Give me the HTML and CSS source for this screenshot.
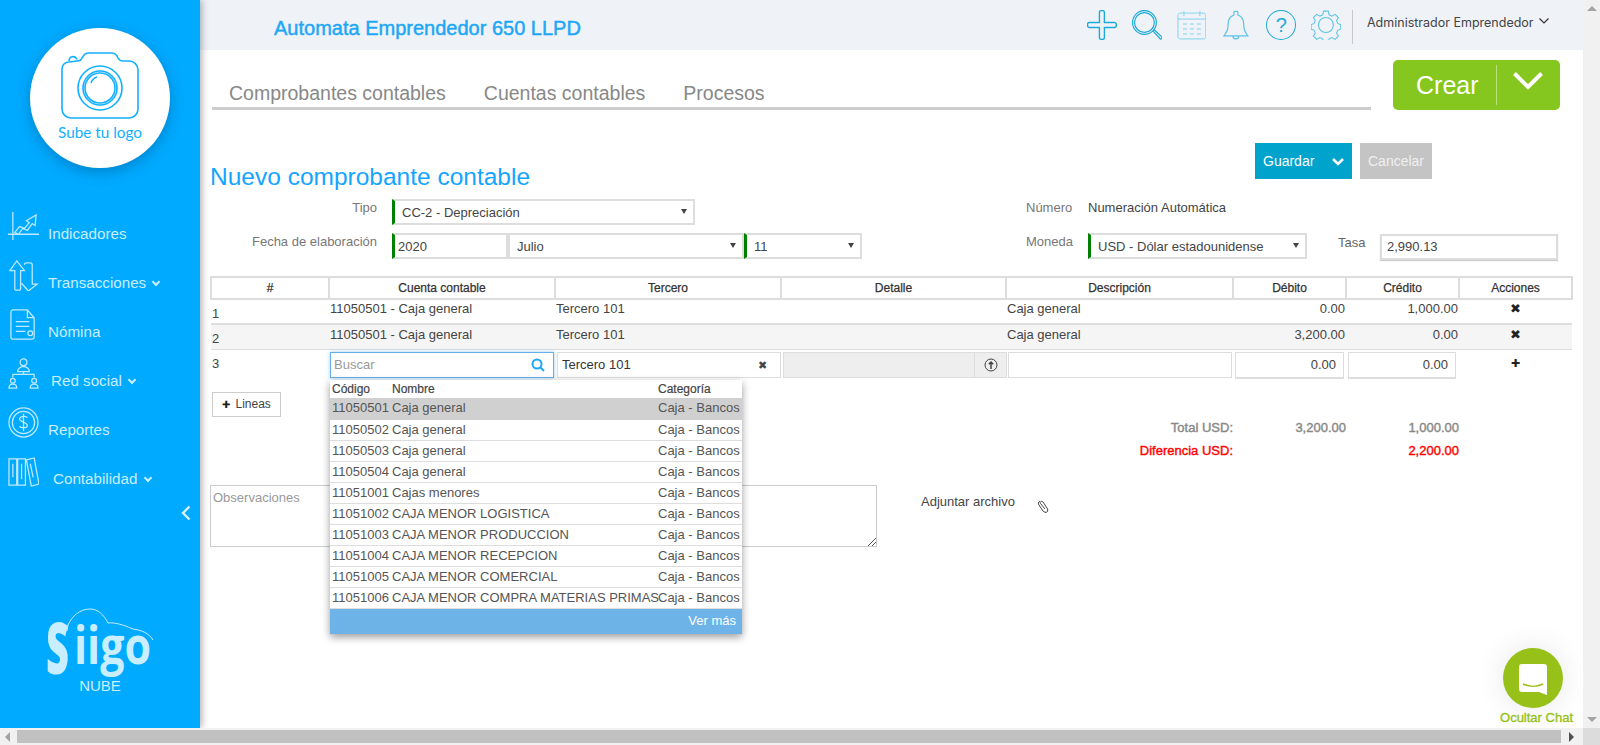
FILE: index.html
```html
<!DOCTYPE html>
<html lang="es">

<head>
  <meta charset="UTF-8">
  <title>Nuevo comprobante contable</title>
  <link rel="stylesheet" href="styles.css">
</head>

<body>
  <div class="window">
    <div class="app">
      <!-- menu lateral -->
      <aside class="sidebar">
        <div class="logo-circle">
          <svg class="camera" viewBox="0 0 78 68" fill="none" stroke="#12b0ff" stroke-width="1.6">
            <path d="M8 10c0-5 6-6 8-1.500M8 11C4 11 1 14 1 18v40c0 5 4 9 9 9h58c5 0 9-4 9-9V19c0-5-4-9-9-9h-6c-3 0-4-1-5-3-1-3-3-5-7-5H28c-4 0-5 2-7 5-1 3-3 3-5 3z" />
            <circle cx="39" cy="37" r="22" />
            <circle cx="39" cy="37" r="17" />
            <circle cx="39" cy="37" r="15" />
            <path d="M30 32c1-3 3-5 6-6" />
          </svg>
          <span class="logo-text">Sube tu logo</span>
        </div>
        <nav class="menu">
          <a class="menu-item">
            <svg class="menu-icon" viewBox="0 0 32 32">
              <path d="M5 1v29M0 24h32M7 22l5-6 5 2 5-6 -3-2 10-6 -1 11 -3-2 -5 7 -5-2 -4 6z" />
            </svg>
            <span class="menu-label">Indicadores</span>
          </a>
          <a class="menu-item">
            <svg class="menu-icon" viewBox="0 0 32 32">
              <path d="M9 1l8 10h-4v19c0 1-1 1-1 1H8c-1 0-1-1-1-1V11H2zM17 5c0-1 1-2 2-2h4c1 0 2 1 2 2v20h5l-9 7 -7-8" />
            </svg>
            <span class="menu-label">Transacciones <i class="caret"></i></span>
          </a>
          <a class="menu-item">
            <svg class="menu-icon" viewBox="0 0 32 32">
              <path d="M5 1h15l7 8v20c0 1-1 2-2 2H5c-1 0-2-1-2-2V3c0-1 1-2 2-2zM20 1v8h7M8 13h14M8 18h14M8 23h10" />
              <circle cx="23" cy="25" r="2.500" />
            </svg>
            <span class="menu-label">Nómina</span>
          </a>
          <a class="menu-item">
            <svg class="menu-icon" viewBox="0 0 32 32">
              <circle cx="16" cy="4.500" r="3.500" />
              <path d="M10 14c0-3 3-5 6-5s6 2 6 5zM16 14v3M5 20v-3h22v3" />
              <circle cx="5" cy="23.500" r="2.500" />
              <circle cx="27" cy="23.500" r="2.500" />
              <path d="M1 31c0-3 2-4 4-4s4 1 4 4zM23 31c0-3 2-4 4-4s4 1 4 4z" />
            </svg>
            <span class="menu-label menu-label-red">Red social <i class="caret"></i></span>
          </a>
          <a class="menu-item">
            <svg class="menu-icon" viewBox="0 0 32 32">
              <circle cx="16" cy="16" r="15" />
              <circle cx="16" cy="16" r="11.500" />
              <path d="M20 11c-1-2-7-2-8 1s8 4 8 7c0 3-7 3-8 1M16 7v18" />
            </svg>
            <span class="menu-label">Reportes</span>
          </a>
          <a class="menu-item">
            <svg class="menu-icon" viewBox="0 0 32 32">
              <path d="M1 3h8v27H1zM10 3h8v27h-8zM19 4l8-2 5 27 -8 2zM5 8v14M14 8v16M23 8l3 14" />
            </svg>
            <span class="menu-label menu-label-cont">Contabilidad <i class="caret"></i></span>
          </a>
        </nav>
        <svg class="collapse" viewBox="0 0 10 16" fill="none" stroke="#d6f1ff" stroke-width="2.400">
          <path d="M8.500 1.500L2 8l6.500 6.500" />
        </svg>
        <div class="brand">
          <svg class="brand-mark" viewBox="0 0 110 70">
            <path class="brand-cloud" d="M21 23L22 17C26 8 34 1 44 1C52 1 58 7 62 15C68 14 78 17 87 21C95 22 103 25 107 32" />
            <text class="brand-s" x="0" y="66" textLength="23" lengthAdjust="spacingAndGlyphs">S</text>
            <text class="brand-word" x="28" y="56" textLength="77" lengthAdjust="spacingAndGlyphs">iigo</text>
          </svg>
          <span class="brand-sub">NUBE</span>
        </div>
      </aside>

      <main class="content">
        <header class="topbar">
          <div class="company">Automata Emprendedor 650 LLPD</div>
          <div class="top-icons">
            <svg viewBox="0 0 30 30" fill="none" stroke="#1caad9" stroke-width="1.400">
              <path d="M12.500 2c0-2 5-2 5 0v10.500H28c2 0 2 5 0 5H17.500V28c0 2-5 2-5 0V17.500H2c-2 0-2-5 0-5h10.500z" />
            </svg>
            <svg viewBox="0 0 30 30" fill="none" stroke="#1caad9" stroke-width="1.200">
              <circle cx="12.500" cy="12.500" r="12" />
              <circle cx="12.500" cy="12.500" r="10" />
              <path d="M21 21l7.500 8c1 .5 2-1 1.500-2l-8-7.500" />
            </svg>
            <svg viewBox="0 0 30 30" fill="none" stroke="#82d3ec" stroke-width="1">
              <path d="M3 3h24c1 0 2 1 2 2v22c0 1-1 2-2 2H3c-1 0-2-1-2-2V5c0-1 1-2 2-2zM1 9h28M7 1v5M23 1v5M6 14h4M13 14h4M20 14h4M6 19h4M13 19h4M20 19h4M6 24h4M13 24h4M20 24h4" />
            </svg>
            <svg viewBox="0 0 30 30" fill="none" stroke="#5cc2e4" stroke-width="1.200">
              <path d="M13 5V2c0-1 4-1 4 0v3c6 2 6 8 6 12 0 4 2 6 4 9H3c2-3 4-5 4-9 0-4 0-10 6-12zM12 26c0 4 6 4 6 0" />
            </svg>
            <span class="help">?</span>
            <svg viewBox="0 0 30 30" fill="none" stroke="#5cc2e4" stroke-width="1.100">
              <path d="M12.500 1h5l1 4 3 1.500 3.500-2 3.500 3.500-2 3.500 1.500 3 3 1v5l-3 1-1.500 3 2 3.500-3.500 3.500-3.500-2-3 1.500-1 3h-5l-1-3-3-1.500-3.500 2-3.500-3.500 2-3.500-1.500-3-3-1v-5l3-1 1.500-3-2-3.500 3.500-3.500 3.500 2 3-1.500z" transform="translate(15 15) scale(.93) translate(-15 -16)" />
              <circle cx="15" cy="15" r="7.500" />
            </svg>
          </div>
          <div class="user">Administrador Emprendedor
            <svg class="user-caret" viewBox="0 0 10 6" fill="none" stroke="#333" stroke-width="1.200">
              <path d="M.5.500l4.500 4.500 4.500-4.500" />
            </svg>
          </div>
        </header>

        <div class="tabs-row">
          <div class="tabs">
            <a class="tab">Comprobantes contables</a>
            <a class="tab">Cuentas contables</a>
            <a class="tab">Procesos</a>
          </div>
          <div class="btn-crear">
            <span class="crear-text">Crear</span>
            <svg class="crear-caret" viewBox="0 0 30 18" fill="none" stroke="#fff" stroke-width="4">
              <path d="M1.500 1.500L15 15 28.500 1.500" />
            </svg>
          </div>
        </div>

        <div class="title-row">
          <h1>Nuevo comprobante contable</h1>
          <div class="actions">
            <button class="btn-guardar">Guardar
              <svg viewBox="0 0 12 8" fill="none" stroke="#fff" stroke-width="2.600">
                <path d="M1 1l5 5 5-5" />
              </svg>
            </button>
            <button class="btn-cancelar">Cancelar</button>
          </div>
        </div>

        <div class="form">
          <div class="form-col">
            <div class="form-row">
              <label class="label">Tipo</label>
              <div class="select required select-tipo">CC-2 - Depreciación</div>
            </div>
            <div class="form-row">
              <label class="label">Fecha de elaboración</label>
              <div class="date">
                <div class="select required select-year">2020</div>
                <div class="select select-month">Julio</div>
                <div class="select required select-day">11</div>
              </div>
            </div>
          </div>
          <div class="form-col form-col-right">
            <div class="form-row">
              <label class="label label-right">Número</label>
              <span class="value">Numeración Automática</span>
            </div>
            <div class="form-row">
              <label class="label label-right">Moneda</label>
              <div class="select required select-moneda">USD - Dólar estadounidense</div>
              <label class="label-tasa">Tasa</label>
              <div class="input input-tasa">2,990.13</div>
            </div>
          </div>
        </div>

        <table class="grid">
          <colgroup>
            <col class="w-num">
            <col class="w-lg">
            <col class="w-lg">
            <col class="w-det">
            <col class="w-desc">
            <col class="w-sm">
            <col class="w-sm">
            <col class="w-sm">
          </colgroup>
          <thead>
            <tr>
              <th>#</th>
              <th>Cuenta contable</th>
              <th>Tercero</th>
              <th>Detalle</th>
              <th>Descripción</th>
              <th>Débito</th>
              <th>Crédito</th>
              <th>Acciones</th>
            </tr>
          </thead>
          <tbody>
            <tr class="line">
              <td class="num">1</td>
              <td>11050501 - Caja general</td>
              <td>Tercero 101</td>
              <td></td>
              <td>Caja general</td>
              <td class="amount">0.00</td>
              <td class="amount">1,000.00</td>
              <td class="act">✖</td>
            </tr>
            <tr class="line line-alt">
              <td class="num">2</td>
              <td>11050501 - Caja general</td>
              <td>Tercero 101</td>
              <td></td>
              <td>Caja general</td>
              <td class="amount">3,200.00</td>
              <td class="amount">0.00</td>
              <td class="act">✖</td>
            </tr>
            <tr class="edit">
              <td class="num-edit">3</td>
              <td class="cell-search">
                <div class="input input-search">
                  <span>Buscar</span>
                  <svg viewBox="0 0 14 14" fill="none" stroke="#1ea7f5" stroke-width="2">
                    <circle cx="6" cy="6" r="4.500" />
                    <path d="M9.500 9.500L13 13" />
                  </svg>
                </div>
                <div class="dropdown">
                  <div class="dd-row dd-head"><span>Código</span><span>Nombre</span><span>Categoría</span></div>
                  <div class="dd-row dd-active"><span>11050501</span><span>Caja general</span><span>Caja - Bancos</span></div>
                  <div class="dd-row"><span>11050502</span><span>Caja general</span><span>Caja - Bancos</span></div>
                  <div class="dd-row"><span>11050503</span><span>Caja general</span><span>Caja - Bancos</span></div>
                  <div class="dd-row"><span>11050504</span><span>Caja general</span><span>Caja - Bancos</span></div>
                  <div class="dd-row"><span>11051001</span><span>Cajas menores</span><span>Caja - Bancos</span></div>
                  <div class="dd-row"><span>11051002</span><span>CAJA MENOR LOGISTICA</span><span>Caja - Bancos</span></div>
                  <div class="dd-row"><span>11051003</span><span>CAJA MENOR PRODUCCION</span><span>Caja - Bancos</span></div>
                  <div class="dd-row"><span>11051004</span><span>CAJA MENOR RECEPCION</span><span>Caja - Bancos</span></div>
                  <div class="dd-row"><span>11051005</span><span>CAJA MENOR COMERCIAL</span><span>Caja - Bancos</span></div>
                  <div class="dd-row"><span>11051006</span><span>CAJA MENOR COMPRA MATERIAS PRIMAS</span><span>Caja - Bancos</span></div>
                  <div class="dd-more">Ver más</div>
                </div>
              </td>
              <td>
                <div class="input input-tercero"><span>Tercero 101</span><span class="clear">✖</span></div>
              </td>
              <td>
                <div class="detalle">
                  <div class="detalle-field"></div>
                  <div class="detalle-btn">
                    <svg viewBox="0 0 14 14" fill="none" stroke="#444" stroke-width="1">
                      <circle cx="7" cy="7" r="6" />
                      <path stroke-width="1.500" d="M7 11V4M4.800 6.200L7 4l2.200 2.200" />
                    </svg>
                  </div>
                </div>
              </td>
              <td>
                <div class="input input-desc"></div>
              </td>
              <td>
                <div class="input input-amount input-debito">0.00</div>
              </td>
              <td>
                <div class="input input-amount input-credito">0.00</div>
              </td>
              <td class="act act-edit">✚</td>
            </tr>
          </tbody>
        </table>

        <button class="btn-lineas"><span class="plus">✚</span> Lineas</button>

        <div class="totals">
          <span>Total USD:</span><span>3,200.00</span><span>1,000.00</span>
          <span class="diff">Diferencia USD:</span><span></span><span class="diff">2,200.00</span>
        </div>

        <div class="notes">
          <div class="textarea">Observaciones
            <svg class="resize" viewBox="0 0 9 9" stroke="#555" stroke-width="1">
              <path d="M1 9l8-8M5 9l4-4" />
            </svg>
          </div>
          <span class="attach">Adjuntar archivo</span>
          <svg class="clip" viewBox="0 0 12 14" fill="none" stroke="#444" stroke-width="1">
            <path d="M3 2c-2 1-2 3-1 4l4 6c1 1 3 2 4 1s1-3 0-4L6 3C5 2 4 2 3.500 3S3 4 4 5l4 5" />
          </svg>
        </div>

        <div class="chat">
          <div class="chat-circle">
            <svg viewBox="0 0 28 31">
              <path fill="#fff" d="M3 0h22c2 0 3 1 3 3v28l-8-3H3c-2 0-3-1-3-3V3c0-2 1-3 3-3z" />
              <path fill="none" stroke="#97c118" stroke-width="1.600" d="M4 20c6 3 14 3 20 0" />
            </svg>
          </div>
          <span class="chat-text">Ocultar Chat</span>
        </div>
      </main>
    </div>

    <!-- barras de desplazamiento -->
    <div class="vbar"><i class="arrow arrow-up"></i><i class="arrow arrow-down"></i></div>
    <div class="hbar"><i class="arrow arrow-left"></i><div class="thumb"></div><i class="arrow arrow-right"></i></div>
    <div class="corner"></div>
  </div>
</body>

</html>
```

FILE: styles.css
```css
* {
  box-sizing: border-box;
}

html,
body {
  margin: 0;
  height: 100%;
  overflow: hidden;
}

body {
  font-family: "Liberation Sans", Arial, sans-serif;
  font-size: 13px;
  color: #555;
  background: #fff;
}

.window {
  display: grid;
  grid-template-columns: 1583px 17px;
  grid-template-rows: 728px 17px;
  height: 745px;
}

.app {
  display: flex;
  overflow: hidden;
}

/* sidebar */
.sidebar {
  width: 200px;
  flex: none;
  display: flex;
  flex-direction: column;
  background: #00aaff;
  box-shadow: 2px 0 7px rgba(0, 0, 0, .3);
  z-index: 2;
}

.logo-circle {
  width: 140px;
  height: 140px;
  margin: 28px 0 0 30px;
  border-radius: 50%;
  background: #fff;
  box-shadow: 0 4px 14px rgba(0, 60, 110, .35);
  display: flex;
  flex-direction: column;
  align-items: center;
  padding-top: 23px;
}

.camera {
  width: 78px;
  height: 68px;
}

.logo-text {
  font-family: Lato, sans-serif;
  font-size: 15.300px;
  color: #12b0ff;
  margin-top: 4px;
}

.menu {
  margin-top: 41px;
}

.menu-item {
  display: flex;
  align-items: flex-start;
  height: 49px;
  padding-left: 8px;
}

.menu-icon {
  width: 31px;
  height: 31px;
  margin-top: 2px;
  fill: none;
  stroke: #bfeaff;
  stroke-width: 1.300;
  flex: none;
}

.menu-label {
  margin: 16px 0 0 9px;
  font-size: 15.200px;
  line-height: 18px;
  color: #c8eeff;
}

.menu-label-red {
  margin-left: 12px;
}

.menu-label-cont {
  margin-left: 14px;
}

.caret {
  display: inline-block;
  width: 6px;
  height: 6px;
  margin: 0 0 3px 3px;
  border-right: 2px solid #c8eeff;
  border-bottom: 2px solid #c8eeff;
  transform: rotate(45deg);
}

.collapse {
  width: 10px;
  height: 16px;
  margin: 2px 0 0 181px;
}

.brand {
  margin-top: auto;
  padding-bottom: 34px;
  display: flex;
  flex-direction: column;
  align-items: center;
}

.brand-mark {
  width: 110px;
  height: 70px;
  margin-left: 2px;
}

.brand-cloud {
  fill: none;
  stroke: #c8eeff;
  stroke-width: 1;
}

.brand-s {
  font-family: "Open Sans", sans-serif;
  font-weight: 800;
  font-size: 70px;
  fill: #c8eeff;
}

.brand-word {
  font-family: "Open Sans", sans-serif;
  font-weight: 700;
  font-size: 52px;
  fill: #c8eeff;
}

.brand-sub {
  font-size: 15px;
  color: #c8eeff;
  margin-top: -1px;
}

/* area principal */
.content {
  flex: 1;
  min-width: 0;
  position: relative;
}

.topbar {
  height: 50px;
  display: flex;
  align-items: flex-start;
  background: #eff3f8;
  padding-top: 10px;
}

.company {
  width: 887px;
  padding-left: 74px;
  font-size: 20px;
  line-height: 36px;
  -webkit-text-stroke: .45px #1ea7f5;
  color: #1ea7f5;
}

.top-icons {
  display: flex;
  gap: 15px;
  width: 266px;
  padding-right: 11px;
  border-right: 1px solid #c8c8c8;
  height: 34px;
}

.top-icons svg {
  width: 30px;
  height: 30px;
}

.help {
  width: 30px;
  height: 30px;
  border: 1.300px solid #1caad9;
  border-radius: 50%;
  text-align: center;
  font-size: 20px;
  line-height: 28px;
  color: #1caad9;
}

.user {
  margin-left: 14px;
  font-family: Inter, sans-serif;
  font-size: 12.500px;
  line-height: 26px;
  color: #444;
  white-space: nowrap;
}

.user-caret {
  width: 10px;
  height: 6px;
  margin: 0 0 3px 2px;
}

.tabs-row {
  display: flex;
  height: 60px;
  padding: 10px 0 0 12px;
}

.tabs {
  width: 1159px;
  display: flex;
  gap: 38px;
  padding: 22px 0 0 17px;
  border-bottom: 3px solid #ccc;
}

.tab {
  font-size: 19.500px;
  line-height: 22px;
  color: #888;
}

.btn-crear {
  width: 167px;
  height: 50px;
  margin-left: 22px;
  background: #85c71e;
  border-radius: 5px;
  display: flex;
  padding-top: 5px;
}

.crear-text {
  width: 104px;
  height: 40px;
  padding-left: 23px;
  border-right: 1px solid #b9e07a;
  font-size: 25px;
  line-height: 40px;
  color: #fff;
}

.crear-caret {
  width: 30px;
  height: 18px;
  margin: 7px 0 0 16px;
}

.title-row {
  display: flex;
  justify-content: space-between;
  height: 56px;
  margin-top: 33px;
  padding: 0 151px 0 10px;
}

h1 {
  margin: 20px 0 0;
  font-size: 24.500px;
  font-weight: 400;
  line-height: 28px;
  color: #14a5ff;
}

.actions {
  display: flex;
  gap: 8px;
}

button {
  font-family: inherit;
  border: 0;
  padding: 0;
}

.btn-guardar {
  width: 97px;
  height: 36px;
  background: #00a3cc;
  color: #fff;
  font-size: 14px;
  text-align: left;
  padding-left: 8px;
}

.btn-guardar svg {
  width: 12px;
  height: 8px;
  margin-left: 14px;
}

.btn-cancelar {
  width: 72px;
  height: 36px;
  background: #c4c4c4;
  color: #f0f0f0;
  font-size: 14px;
}

/* formulario */
.form {
  display: flex;
}

.form-col {
  width: 826px;
  flex: none;
}

.form-row {
  display: flex;
  align-items: flex-start;
  height: 34px;
}

.label {
  width: 177px;
  line-height: 18px;
  text-align: right;
  color: #777;
  margin-right: 15px;
}

.label-right {
  width: 48px;
  text-align: left;
  margin-right: 14px;
}

.value {
  line-height: 18px;
  color: #444;
}

.select,
.input {
  height: 26px;
  border: 2px solid #ddd;
  background: #fff;
  line-height: 24px;
  color: #444;
  position: relative;
}

.select {
  padding-left: 7px;
}

.select::after {
  content: "";
  position: absolute;
  top: 8px;
  right: 6px;
  border: 3px solid transparent;
  border-top: 5px solid #444;
  border-bottom: 0;
}

.required {
  border-left: 3px solid #008000;
}

.select-tipo {
  width: 303px;
}

.date {
  display: flex;
}

.select-year {
  width: 116px;
  padding-left: 3px;
}

.select-year::after {
  display: none;
}

.select-month {
  width: 236px;
}

.select-day {
  width: 118px;
}

.form-col-right {
  width: 557px;
}

.select-moneda {
  width: 219px;
}

.label-tasa {
  width: 73px;
  padding-left: 31px;
  line-height: 20px;
  color: #666;
}

.input-tasa {
  width: 178px;
  margin-top: 1px;
  justify-content: flex-end;
  box-shadow: 0 1px 1px #ccc;
}

/* tabla de lineas */
.grid {
  width: 1361px;
  margin: 9px 0 0 10px;
  border-collapse: collapse;
  table-layout: fixed;
  color: #444;
}

.w-num {
  width: 118px;
}

.w-lg {
  width: 226px;
}

.w-det {
  width: 225px;
}

.w-desc {
  width: 227px;
}

.w-sm {
  width: 113px;
}

th {
  height: 22px;
  padding: 0;
  border: 2px solid #ddd;
  font-size: 12px;
  font-weight: 400;
  -webkit-text-stroke: .25px #333;
  color: #333;
}

td {
  padding: 1px;
  vertical-align: top;
  white-space: nowrap;
}

.line td {
  height: 23px;
  padding-top: 0;
  line-height: 17px;
  border-bottom: 2px solid #ddd;
}

.line-alt td {
  height: 25px;
  padding-top: 1px;
  background: #f5f5f5;
  border-bottom: 1px solid #ddd;
}

.line .num {
  padding-top: 5px;
}

.num-edit {
  padding-top: 6px;
}

.amount {
  text-align: right;
}

.act {
  text-align: center;
  font-size: 13px;
  color: #222;
}

.edit td {
  height: 30px;
  padding-top: 2px;
}

.edit .num-edit {
  padding-top: 6px;
}

.edit .act-edit {
  padding-top: 7px;
  font-size: 11px;
}

.cell-search {
  position: relative;
}

.input {
  display: flex;
  justify-content: space-between;
  align-items: center;
  padding: 0 5px;
}

.input-search {
  border: 1px solid #66afe9;
  box-shadow: 0 0 4px rgba(102, 175, 233, .6);
  color: #999;
  padding-left: 3px;
}

.input-search svg {
  width: 14px;
  height: 14px;
  margin-right: 3px;
}

.input-tercero {
  width: 224px;
  margin-left: 1px;
  border-width: 1px;
  color: #333;
  padding-left: 4px;
}

.clear {
  font-size: 11px;
  color: #444;
  margin-right: 8px;
}

.detalle {
  display: flex;
  width: 224px;
  height: 26px;
  margin-left: 1px;
  border: 1px solid #ddd;
}

.detalle-field {
  flex: 1;
  background: #eee;
}

.detalle-btn {
  width: 32px;
  background: #eee;
  border-left: 1px solid #ddd;
  display: flex;
  align-items: center;
  justify-content: center;
}

.detalle-btn svg {
  width: 14px;
  height: 14px;
}

.input-desc {
  width: 224px;
  margin-left: 1px;
  border-width: 1px;
}

.input-amount {
  justify-content: flex-end;
  height: 27px;
  border-width: 1px;
  border-bottom-width: 2px;
  padding-right: 7px;
}

.input-debito {
  width: 109px;
  margin-left: 1px;
}

.input-credito {
  width: 108px;
  margin-left: 1px;
}

.dropdown {
  position: absolute;
  top: 30px;
  left: 1px;
  width: 412px;
  background: #fff;
  box-shadow: 0 3px 8px rgba(0, 0, 0, .4);
  z-index: 3;
}

.dd-row {
  display: grid;
  grid-template-columns: 60px 266px 84px;
  height: 21px;
  padding-left: 2px;
  border-bottom: 1px solid #ddd;
  font-size: 13px;
  line-height: 20px;
  color: #555;
  white-space: nowrap;
}

.dd-head {
  height: 18px;
  border: 0;
  font-size: 12px;
  line-height: 18px;
  color: #444;
  -webkit-text-stroke: .2px #444;
}

.dd-active {
  height: 22px;
  background: #d0d0d0;
  border: 0;
}

.dd-more {
  height: 25px;
  padding-right: 6px;
  background: #6db3e8;
  color: #fff;
  font-size: 13px;
  line-height: 24px;
  text-align: right;
}

.btn-lineas {
  display: block;
  width: 69px;
  height: 25px;
  margin: 12px 0 0 12px;
  background: #fff;
  border: 1px solid #ccc;
  font-size: 12px;
  color: #444;
}

.plus {
  font-size: 10px;
  color: #222;
  margin-right: 2px;
}

.totals {
  display: grid;
  grid-template-columns: 1033px 113px 113px;
  grid-auto-rows: 23px;
  margin-top: 2px;
  font-size: 13px;
  line-height: 18px;
  text-align: right;
  color: #888;
  -webkit-text-stroke: .4px #888;
}

.totals .diff {
  color: #f00;
  -webkit-text-stroke: .4px #f00;
}

.notes {
  display: flex;
  align-items: flex-start;
  margin: 20px 0 0 10px;
}

.textarea {
  width: 667px;
  height: 62px;
  padding: 3px 2px;
  border: 1px solid #ccc;
  line-height: 18px;
  color: #999;
  position: relative;
}

.resize {
  position: absolute;
  right: 0;
  bottom: 0;
  width: 9px;
  height: 9px;
}

.attach {
  margin: 8px 0 0 44px;
  line-height: 18px;
  color: #444;
}

.clip {
  width: 12px;
  height: 14px;
  margin: 14px 0 0 22px;
}

/* chat */
.chat {
  position: absolute;
  right: 10px;
  top: 648px;
  width: 74px;
  display: flex;
  flex-direction: column;
  align-items: flex-end;
}

.chat-circle {
  width: 60px;
  height: 60px;
  margin-right: 10px;
  border-radius: 50%;
  background: #97c118;
  box-shadow: 0 0 30px rgba(0, 0, 0, .1);
  display: flex;
  align-items: center;
  justify-content: center;
}

.chat-circle svg {
  width: 28px;
  height: 31px;
  margin-top: 3px;
}

.chat-text {
  margin-top: 2px;
  font-size: 13px;
  line-height: 16px;
  white-space: nowrap;
  color: #97c118;
  -webkit-text-stroke: .35px #97c118;
}

/* barras */
.vbar {
  background: #f1f1f1;
  display: flex;
  flex-direction: column;
  justify-content: space-between;
  align-items: center;
  padding: 6px 0;
}

.hbar {
  background: #f1f1f1;
  display: flex;
  align-items: center;
  padding: 0 7px 0 5px;
}

.thumb {
  width: 1544px;
  height: 13px;
  margin: 0 8px 0 7px;
  background: #c1c1c1;
}

.corner {
  background: #dcdcdc;
}

.arrow {
  display: block;
  border: 5px solid transparent;
}

.arrow-up {
  border-bottom-color: #a3a3a3;
  border-top: 0;
}

.arrow-down {
  border-top-color: #a3a3a3;
  border-bottom: 0;
}

.arrow-left {
  border-right-color: #a3a3a3;
  border-left: 0;
}

.arrow-right {
  border-left-color: #505050;
  border-right: 0;
}
```
